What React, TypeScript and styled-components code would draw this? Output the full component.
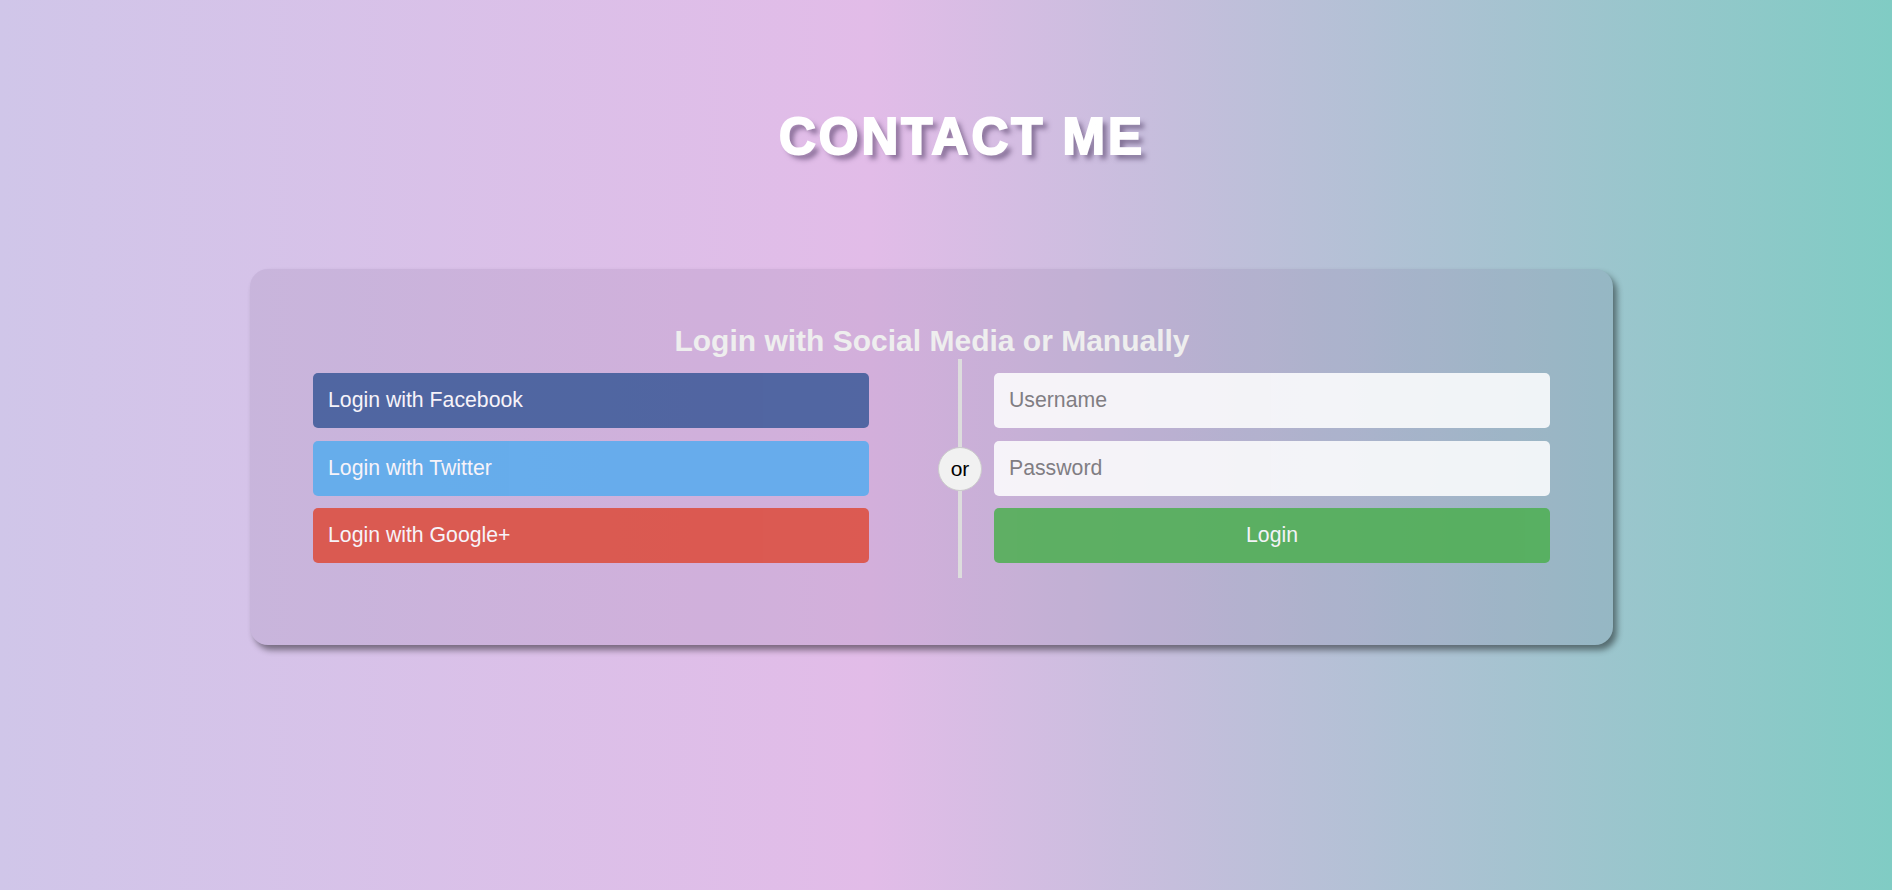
import React from 'react'
import styled, { createGlobalStyle } from 'styled-components'

const GlobalStyle = createGlobalStyle`
  html, body {
    margin: 0;
    padding: 0;
  }

  body {
    min-height: 890px;
    font-family: 'Liberation Sans', Arial, sans-serif;
    background: linear-gradient(
      to right,
      #d0c6e9 0%,
      #e2bce8 46%,
      #c5bedc 62%,
      #a5c3d0 80%,
      #80ccc4 100%
    );
  }

  * {
    box-sizing: border-box;
  }
`

const Page = styled.div`
  min-height: 890px;
  padding-top: 111px;
`

const Title = styled.h1`
  margin: 0;
  padding-left: 32px;
  text-align: center;
  font-family: 'Liberation Sans', Arial, sans-serif;
  font-weight: 900;
  font-size: 51px;
  line-height: 51px;
  letter-spacing: 3px;
  color: #fff;
  -webkit-text-stroke: 2px #fff;
  text-shadow: 5px 5px 5px rgba(70, 50, 90, 0.55);
`

const Card = styled.div`
  margin: 107px 0 0 250px;
  width: 1363px;
  padding: 55px 0 67px;
  border-radius: 18px;
  background: rgba(110, 80, 130, 0.12);
  box-shadow: 4px 5px 6px rgba(0, 0, 0, 0.45);
`

const Heading = styled.h2`
  margin: 0 0 1px;
  padding-left: 1px;
  text-align: center;
  font-size: 30px;
  line-height: 34px;
  font-weight: 700;
  color: #eeeeee;
`

const Row = styled.div`
  display: grid;
  grid-template-columns: 556px 1fr 556px;
  height: 219px;
  padding: 0 63px;
`

const Col = styled.div`
  display: flex;
  flex-direction: column;
  gap: 12.5px;
  padding-top: 14px;
`

const Divider = styled.div`
  display: flex;
  flex-direction: column;
  align-items: center;
  width: 44px;
  margin-left: 69px;
`

const Line = styled.div`
  flex: 1;
  width: 4.5px;
  background: #dddddd;
`

const Or = styled.span`
  display: flex;
  align-items: center;
  justify-content: center;
  width: 44px;
  height: 44px;
  border-radius: 50%;
  border: 1px solid #cccccc;
  background: #f1f1f1;
  color: #000;
  font-size: 21px;
  font-weight: 400;
`

const SocialButton = styled.a<{ bg: string }>`
  display: block;
  height: 55px;
  padding: 15px;
  border-radius: 5px;
  background: ${({ bg }) => bg};
  opacity: 0.85;
  color: #fff;
  font-size: 21.25px;
  line-height: 25px;
  text-decoration: none;
  cursor: pointer;
`

const Input = styled.input`
  display: block;
  width: 100%;
  height: 55px;
  padding: 15px;
  border: none;
  border-radius: 5px;
  background: #fff;
  opacity: 0.85;
  font-family: 'Liberation Sans', Arial, sans-serif;
  font-size: 21.25px;
  line-height: 25px;
  color: #333;
  outline: none;

  &::placeholder {
    color: #757575;
  }
`

const Submit = styled.button`
  display: block;
  width: 100%;
  height: 55px;
  padding: 15px;
  border: none;
  border-radius: 5px;
  background: #4caf50;
  opacity: 0.85;
  color: #fff;
  font-family: 'Liberation Sans', Arial, sans-serif;
  font-size: 21.25px;
  line-height: 25px;
  cursor: pointer;
`

const socials = [
  { label: 'Login with Facebook', color: '#3b5998' },
  { label: 'Login with Twitter', color: '#55acee' },
  { label: 'Login with Google+', color: '#dd4b39' },
]

export default function App() {
  return (
    <Page>
      <GlobalStyle />
      <Title>CONTACT ME</Title>
      <Card>
        <Heading>Login with Social Media or Manually</Heading>
        <Row>
          <Col>
            {socials.map((s) => (
              <SocialButton key={s.label} bg={s.color}>
                {s.label}
              </SocialButton>
            ))}
          </Col>
          <Divider>
            <Line />
            <Or>or</Or>
            <Line />
          </Divider>
          <Col>
            <Input type="text" placeholder="Username" />
            <Input type="password" placeholder="Password" />
            <Submit type="button">Login</Submit>
          </Col>
        </Row>
      </Card>
    </Page>
  )
}
